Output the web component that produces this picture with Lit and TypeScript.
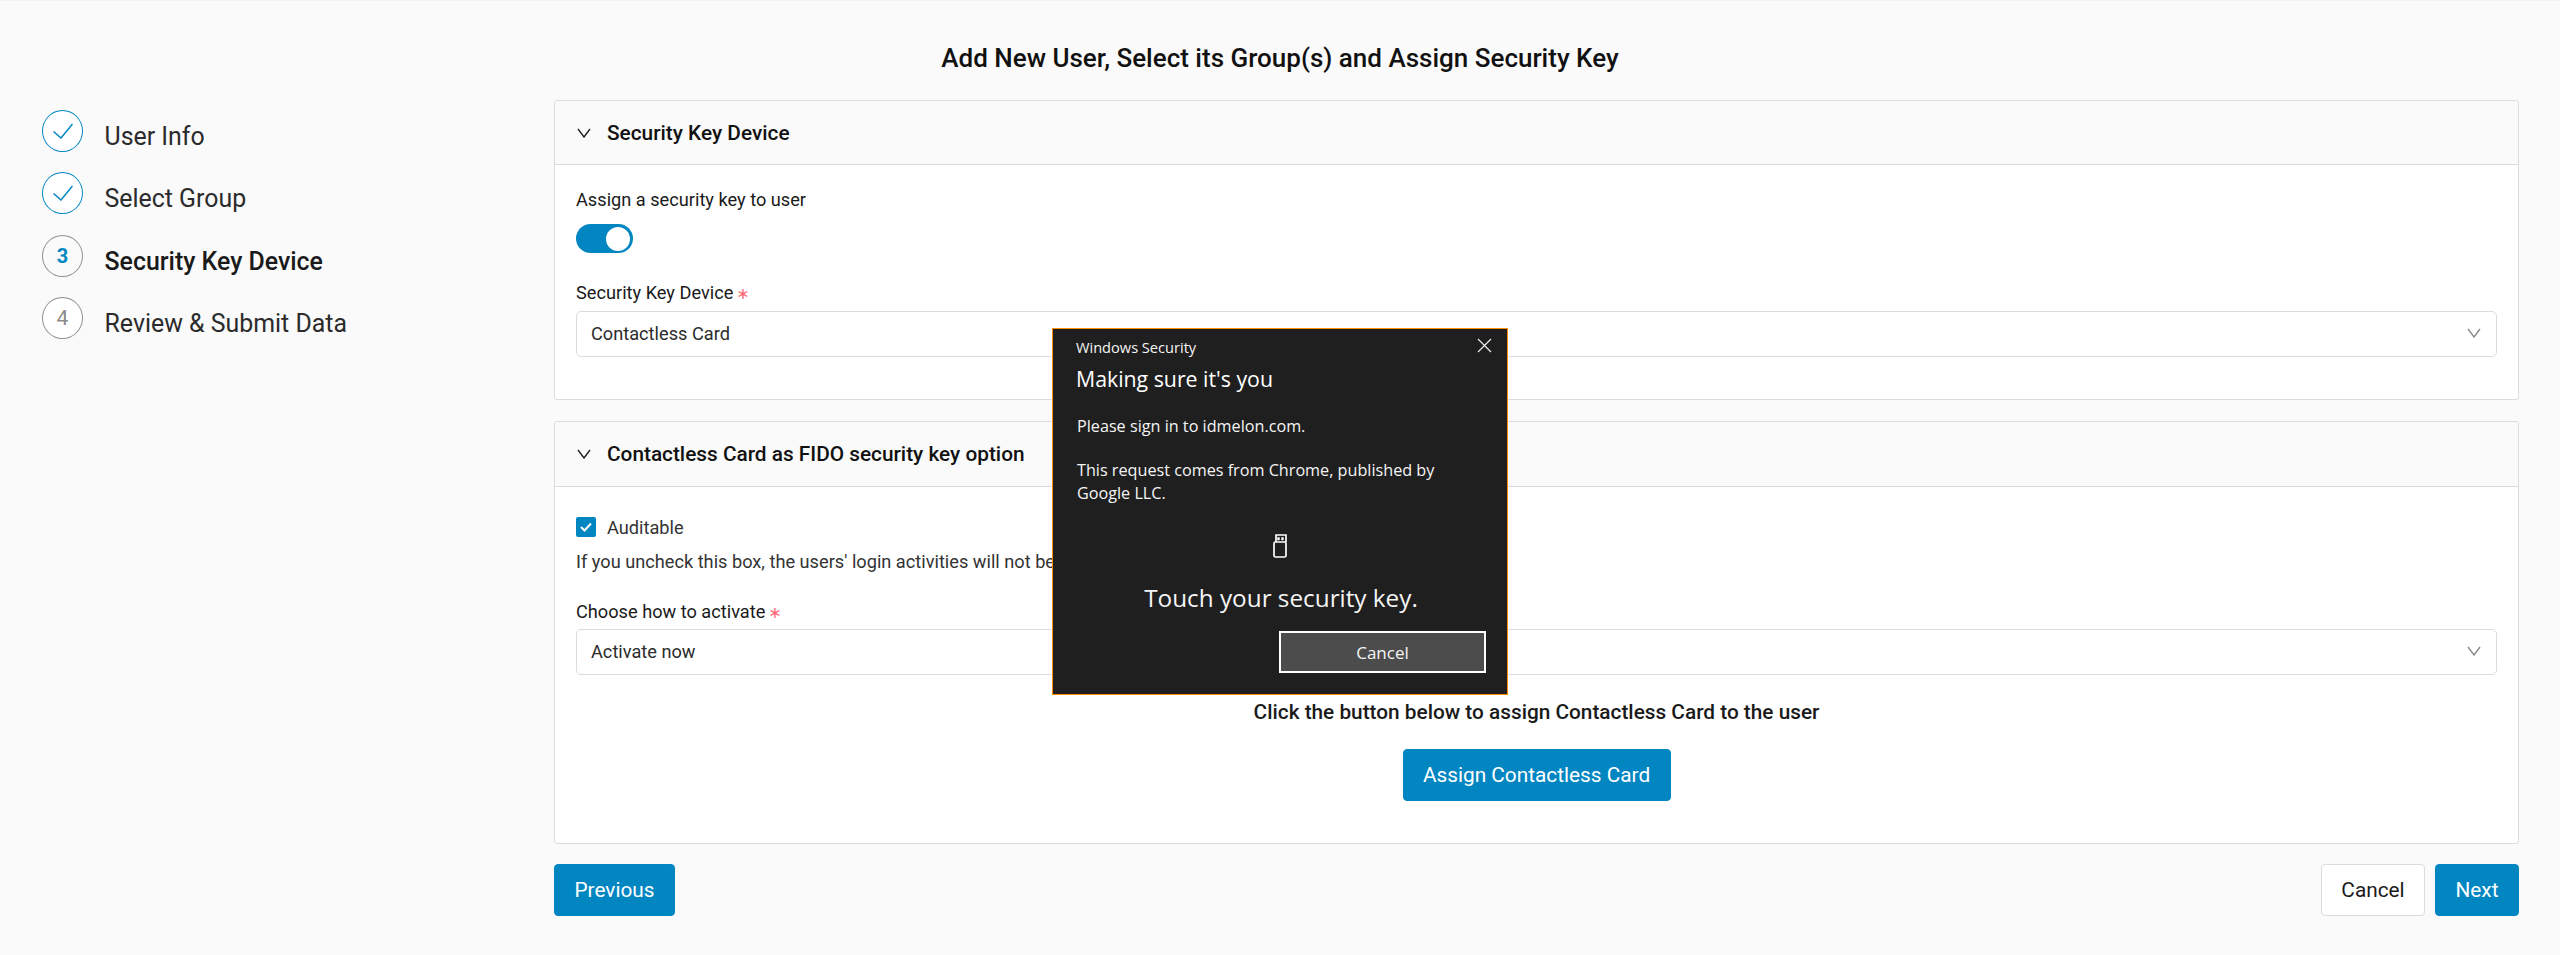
import { LitElement, html, css, svg } from 'lit';
import { customElement } from 'lit/decorators.js';

const chevron = (cls: string) => html`<svg class=${cls} viewBox="0 0 14 10" fill="none" stroke="currentColor" stroke-width="1.4"><path d="M1 1l6 8 6-8" /></svg>`;

const steps = [
  { label: 'User Info', state: 'done' },
  { label: 'Select Group', state: 'done' },
  { label: 'Security Key Device', state: 'active', num: '3' },
  { label: 'Review & Submit Data', state: 'todo', num: '4' },
];

@customElement('app-root')
export class AppRoot extends LitElement {
  static override styles = css`
    :host {
      display: block;
      position: relative;
      min-height: 955px;
      background: #fafafa;
      color: #1a1a1a;
      font-family: Roboto, sans-serif;
      font-size: 18.2px;
      overflow: hidden;
    }
    .page {
      padding: 41px 41px 0 42px;
      border-top: 1px solid #f2f2f2;
    }
    h1 {
      margin: 0 0 26px;
      padding-right: 1px;
      text-align: center;
      font-size: 26px;
      line-height: 32px;
      font-weight: 500;
      color: #111;
    }
    .content {
      display: flex;
    }
    .side {
      width: 512px;
      flex: none;
      padding-top: 10px;
    }
    .step {
      display: flex;
      height: 62.4px;
      font-size: 24.9px;
      color: #2b2b2b;
    }
    .step.active {
      font-weight: 500;
      color: #1a1a1a;
    }
    .circle {
      width: 41px;
      height: 42px;
      box-sizing: border-box;
      border: 1px solid #8f8f8f;
      border-radius: 50%;
      background: #fff;
      flex: none;
      display: flex;
      align-items: center;
      justify-content: center;
      margin-right: 21.5px;
      font-size: 21px;
      font-weight: 400;
      color: #8a8a8a;
    }
    .step.done .circle {
      border-color: #0286c2;
    }
    .step.done .circle svg {
      width: 20px;
      height: 16px;
    }
    .step.active .circle {
      background: transparent;
      color: #0286c2;
      font-weight: 700;
      font-size: 20px;
      padding-top: 1px;
    }
    .step span.text {
      line-height: 28px;
      padding-top: 13px;
    }
    .main {
      flex: 1;
      min-width: 0;
    }
    .card {
      border: 1px solid #dcdcdc;
      border-radius: 3px;
      background: #fff;
      margin-bottom: 21px;
    }
    .card.last {
      margin-bottom: 20px;
    }
    .card-head {
      display: flex;
      align-items: center;
      height: 63px;
      padding: 0 22px;
      background: #fafafa;
      border-bottom: 1px solid #dcdcdc;
      border-radius: 3px 3px 0 0;
      font-size: 20.8px;
      font-weight: 500;
      color: #111;
    }
    .card-head.tall {
      height: 64px;
    }
    .head-chevron {
      width: 14px;
      height: 10px;
      margin-right: 16px;
      color: #222;
    }
    .body {
      padding: 23px 21px 42px;
    }
    .body.second {
      padding-top: 30px;
      padding-bottom: 42px;
    }
    .label {
      line-height: 24px;
    }
    .toggle {
      display: flex;
      justify-content: flex-end;
      align-items: center;
      width: 57px;
      height: 29px;
      box-sizing: border-box;
      padding-right: 3px;
      margin: 12px 0 28px;
      border-radius: 15px;
      background: #0286c2;
    }
    .knob {
      width: 24px;
      height: 24px;
      border-radius: 50%;
      background: #fff;
    }
    .req {
      color: #ff6b78;
      font-family: 'DejaVu Sans', sans-serif;
      font-size: 16px;
      margin-left: 3px;
    }
    .select {
      display: flex;
      align-items: center;
      justify-content: space-between;
      height: 46px;
      box-sizing: border-box;
      margin-top: 5px;
      padding: 0 15px 2px 14px;
      border: 1px solid #dcdcdc;
      border-radius: 5px;
      background: #fff;
      color: #2b2b2b;
    }
    .body.second .select {
      margin-top: 4px;
    }
    .select-chevron {
      width: 14px;
      height: 10px;
      color: #8a8a8a;
    }
    .check-row {
      display: flex;
      align-items: center;
      height: 20px;
      color: #333;
    }
    .box {
      width: 20px;
      height: 20px;
      border-radius: 2px;
      background: #0286c2;
      margin-right: 11px;
      display: flex;
      align-items: center;
      justify-content: center;
    }
    .box svg {
      width: 12px;
      height: 10px;
    }
    .hint {
      margin: 13px 0 26px;
      line-height: 24px;
      color: #333;
    }
    .assign {
      text-align: center;
    }
    .assign p {
      margin: 23px 0;
      font-size: 20.8px;
      line-height: 28px;
      font-weight: 500;
    }
    button {
      font-family: Roboto, sans-serif;
      font-size: 20.8px;
      height: 52px;
      border: 1px solid #0286c2;
      border-radius: 4px;
      background: #0286c2;
      color: #fff;
      padding: 0 20px;
    }
    button.assign-btn {
      width: 268px;
      padding: 0;
    }
    button.prev {
      width: 121px;
      padding: 0;
    }
    button.next {
      width: 84px;
      padding: 0;
    }
    button.plain {
      width: 104px;
      padding: 0;
      background: #fff;
      border-color: #dcdcdc;
      color: #1a1a1a;
    }
    .footer {
      display: flex;
      align-items: center;
      gap: 10px;
    }
    .spacer {
      flex: 1;
    }
    .dialog {
      position: absolute;
      left: 1052px;
      top: 328px;
      width: 456px;
      height: 367px;
      box-sizing: border-box;
      border: 1px solid #ff8c00;
      background: #1f1f1f;
      color: #fff;
      font-family: 'Open Sans', sans-serif;
      padding: 7px 21px 0 23px;
    }
    .close {
      position: absolute;
      top: 9px;
      right: 15px;
      width: 15px;
      height: 15px;
    }
    .win {
      font-size: 14.6px;
      line-height: 22px;
      color: #f5f5f5;
    }
    .making {
      font-size: 21.3px;
      line-height: 30px;
      margin-top: 6px;
      color: #fff;
    }
    .msg {
      font-size: 16.2px;
      line-height: 23px;
      color: #f5f5f5;
      margin: 21px 0 0 1px;
    }
    .usb {
      display: block;
      width: 14px;
      height: 24px;
      margin: 29px auto 0;
      position: relative;
      left: -1px;
    }
    .touch {
      font-size: 24.3px;
      line-height: 36px;
      text-align: center;
      margin-top: 22px;
      color: #f5f5f5;
    }
    .win-cancel {
      display: flex;
      align-items: center;
      justify-content: center;
      box-sizing: border-box;
      width: 207px;
      height: 42px;
      margin: 15px 0 0 203px;
      border: 2px solid #fff;
      background: #4c4c4c;
      font-size: 17px;
      color: #f5f5f5;
    }
  `;

  private renderStep(s: { label: string; state: string; num?: string }) {
    const inner = s.state === 'done'
      ? svg`<svg viewBox="0 0 20 16" fill="none" stroke="#0286c2" stroke-width="1.5"><path d="M.5 8.5L8 15 19.5 1" /></svg>`
      : s.num;
    return html`<div class="step ${s.state}"><div class="circle">${inner}</div><span class="text">${s.label}</span></div>`;
  }

  override render() {
    return html`
      <div class="page">
        <h1>Add New User, Select its Group(s) and Assign Security Key</h1>
        <div class="content">
          <div class="side">${steps.map((s) => this.renderStep(s))}</div>
          <div class="main">
            <section class="card">
              <div class="card-head">${chevron('head-chevron')}Security Key Device</div>
              <div class="body">
                <div class="label">Assign a security key to user</div>
                <div class="toggle"><div class="knob"></div></div>
                <div class="label">Security Key Device<span class="req">∗</span></div>
                <div class="select">Contactless Card ${chevron('select-chevron')}</div>
              </div>
            </section>
            <section class="card last">
              <div class="card-head tall">${chevron('head-chevron')}Contactless Card as FIDO security key option</div>
              <div class="body second">
                <div class="check-row">
                  <div class="box">
                    <svg viewBox="0 0 12 10" fill="none" stroke="#fff" stroke-width="2"><path d="M1 5l3.5 3.5L11 1.5" /></svg>
                  </div>
                  Auditable
                </div>
                <div class="hint">If you uncheck this box, the users' login activities will not be recorded.</div>
                <div class="label">Choose how to activate<span class="req">∗</span></div>
                <div class="select">Activate now ${chevron('select-chevron')}</div>
                <div class="assign">
                  <p>Click the button below to assign Contactless Card to the user</p>
                  <button class="assign-btn">Assign Contactless Card</button>
                </div>
              </div>
            </section>
            <div class="footer">
              <button class="prev">Previous</button>
              <div class="spacer"></div>
              <button class="plain">Cancel</button>
              <button class="next">Next</button>
            </div>
          </div>
        </div>
      </div>
      <div class="dialog">
        <svg class="close" viewBox="0 0 15 15" fill="none" stroke="#eee" stroke-width="1.2"><path d="M1 1l13 13M14 1L1 14" /></svg>
        <div class="win">Windows Security</div>
        <div class="making">Making sure it's you</div>
        <div class="msg">Please sign in to idmelon.com.</div>
        <div class="msg">This request comes from Chrome, published by<br />Google LLC.</div>
        <svg class="usb" viewBox="0 0 14 24" fill="none" stroke="#fff" stroke-width="1.7">
          <path d="M3 8V1h10v7" />
          <rect x="1" y="8" width="12" height="15" rx="1.5" />
          <path d="M5.5 3.3v3M9.5 3.3v3" stroke-width="2.4" />
        </svg>
        <div class="touch">Touch your security key.</div>
        <div class="win-cancel">Cancel</div>
      </div>
    `;
  }
}
